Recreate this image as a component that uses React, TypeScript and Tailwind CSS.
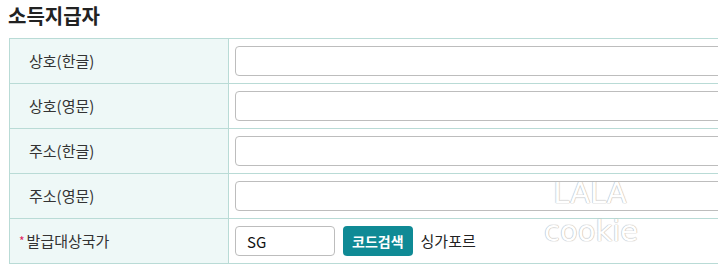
const rows = [
  { label: '상호(한글)' },
  { label: '상호(영문)' },
  { label: '주소(한글)' },
  { label: '주소(영문)' },
]

const font = { fontFamily: '"Noto Sans CJK KR", "Noto Sans", sans-serif' }

export default function App() {
  return (
    <div className="relative w-[718px] h-[272px] overflow-hidden bg-white text-[#222]" style={font}>
      <h2 className="pl-[8px] pt-[1px] h-[38px] text-[20px] font-bold leading-[30px] text-[#222]">소득지급자</h2>
      <div className="ml-[9px] w-[760px] border-t border-l border-[#b9dbd6]">
        {rows.map((r) => (
          <div key={r.label} className="flex h-[45px] border-b border-[#b9dbd6]">
            <div className="w-[219px] shrink-0 flex items-center pl-[19px] bg-[#eef8f7] border-r border-[#b9dbd6] text-[15px] text-[#333]">
              {r.label}
            </div>
            <div className="flex-1 flex items-center pl-[6px]">
              <input className="w-full h-[30px] rounded-[4px] border border-[#bdbdbd] bg-white outline-none" />
            </div>
          </div>
        ))}
        <div className="flex h-[45px] border-b border-[#b9dbd6]">
          <div className="w-[219px] shrink-0 flex items-center pl-[9px] bg-[#eef8f7] border-r border-[#b9dbd6] text-[15px] text-[#333]">
            <span className="text-[#e0245e] text-[12px] mr-[2px]">*</span>
            발급대상국가
          </div>
          <div className="flex-1 flex items-center pl-[6px] gap-[8px]">
            <input
              defaultValue="SG"
              className="w-[100px] h-[30px] rounded-[4px] border border-[#bdbdbd] bg-white px-[11px] text-[15px] text-[#111] outline-none"
            />
            <button className="h-[30px] px-[9px] rounded-[4px] bg-[#0f8a95] text-white text-[14px] font-bold">코드검색</button>
            <span className="text-[15px] text-[#222]">싱가포르</span>
          </div>
        </div>
      </div>
      <div
        className="absolute left-[544px] top-[174px] w-[92px] text-center text-[29px] leading-[38px] text-white pointer-events-none"
        style={{ fontFamily: '"DejaVu Sans", sans-serif', textShadow: '0 0 1px #bdbdbd, 0 0 1px #bdbdbd, 0 0 1px #bdbdbd' }}
      >
        <div>LALA</div>
        <div>cookie</div>
      </div>
    </div>
  )
}
